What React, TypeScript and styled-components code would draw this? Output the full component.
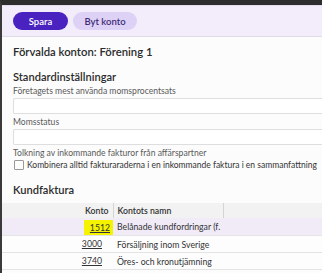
import styled, { createGlobalStyle } from 'styled-components'

const Global = createGlobalStyle`
  html, body {
    margin: 0;
    padding: 0;
    background: #fcfcfc;
    overflow: hidden;
  }
  body {
    font-family: Lato, 'Open Sans', sans-serif;
    color: #333;
  }
`

const Window = styled.div`
  width: 322px;
  height: 273px;
  border-top: 5px solid #2d2d2d;
  border-left: 2px solid #3a3a3a;
  box-sizing: border-box;
  overflow: hidden;
  background: #fcfcfc;
`

const Toolbar = styled.div`
  display: flex;
  gap: 5px;
  padding: 0 11px;
  height: 32px;
  box-sizing: border-box;
  align-items: center;
  background: #f3ecfa;
  border-top: 1px solid #e4dcec;
  border-bottom: 1px solid #e0dbe6;
`

const Button = styled.button<{ $primary?: boolean }>`
  height: 18px;
  padding: 0;
  width: ${p => (p.$primary ? '55px' : '64px')};
  border: none;
  border-radius: 9px;
  font-family: inherit;
  font-size: 9.5px;
  font-weight: 600;
  background: ${p => (p.$primary ? '#4a22bf' : '#ddd1f5')};
  color: ${p => (p.$primary ? '#fff' : '#3d2a78')};
`

const Content = styled.div`
  padding: 8px 0 0 11px;
`

const Title = styled.h1`
  margin: 0 0 11px;
  font-size: 11.3px;
  line-height: 14px;
  font-weight: 600;
  color: #2b2b2b;
`

const Section = styled.h2<{ $gap?: number }>`
  margin: 0 0 ${p => p.$gap ?? 3}px;
  font-size: 11.1px;
  line-height: 13px;
  font-weight: 600;
  color: #2b2b2b;
`

const Label = styled.div`
  font-size: 8.6px;
  line-height: 10px;
  color: #5a5a5a;
  margin-bottom: 2px;
  white-space: nowrap;
`

const Input = styled.div`
  height: 16px;
  box-sizing: border-box;
  border: 1px solid #dedede;
  border-right: none;
  border-radius: 2px 0 0 2px;
  background: #fff;
  margin-bottom: 3px;
`

const CheckRow = styled.label`
  display: flex;
  align-items: center;
  gap: 3px;
  height: 10px;
  font-size: 8.5px;
  color: #333;
  white-space: nowrap;
  margin-bottom: 13px;
`

const Box = styled.span`
  flex: none;
  width: 10px;
  height: 10px;
  margin-left: 1px;
  border: 1px solid #9a9a9a;
  border-radius: 1px;
  background: #fff;
  box-sizing: border-box;
`

const Table = styled.table`
  border-collapse: collapse;
  width: 330px;
  margin-left: -11px;
  font-size: 8.7px;
`

const Th = styled.th<{ $w?: number; $right?: boolean }>`
  background: #f2f2f2;
  font-weight: 600;
  height: 15px;
  padding: 0 4px;
  box-sizing: border-box;
  text-align: ${p => (p.$right ? 'right' : 'left')};
  width: ${p => (p.$w ? `${p.$w}px` : 'auto')};
  border-right: 1px solid #d4d4d4;
  &:last-child { border-right: none; }
`

const Tr = styled.tr<{ $active?: boolean }>`
  background: ${p => (p.$active ? '#f1ebf8' : '#fdfdfd')};
  border-bottom: 1px solid #e4e4e4;
`

const Td = styled.td<{ $num?: boolean }>`
  height: 16px;
  padding: ${p => (p.$num ? '0 11px 0 0' : '0 4px')};
  white-space: nowrap;
  text-align: ${p => (p.$num ? 'right' : 'left')};
`

const Code = styled.a<{ $mark?: boolean }>`
  display: inline-block;
  vertical-align: middle;
  color: #333;
  text-decoration: underline;
  line-height: ${p => (p.$mark ? '15px' : '16px')};
  margin-top: ${p => (p.$mark ? '2px' : '0')};
  background: ${p => (p.$mark ? '#f4f400' : 'transparent')};
  padding: ${p => (p.$mark ? '0 3px 0 6px' : '0')};
  margin-right: ${p => (p.$mark ? '-11px' : '0')};
`

const rows = [
  { code: '1512', name: 'Belånade kundfordringar (f.', active: true },
  { code: '3000', name: 'Försäljning inom Sverige' },
  { code: '3740', name: 'Öres- och kronutjämning' },
]

export default function App() {
  return (
    <Window>
      <Global />
      <Toolbar>
        <Button $primary>Spara</Button>
        <Button>Byt konto</Button>
      </Toolbar>
      <Content>
        <Title>Förvalda konton: Förening 1</Title>
        <Section>Standardinställningar</Section>
        <Label>Företagets mest använda momsprocentsats</Label>
        <Input />
        <Label>Momsstatus</Label>
        <Input />
        <Label>Tolkning av inkommande fakturor från affärspartner</Label>
        <CheckRow>
          <Box />
          Kombinera alltid fakturaraderna i en inkommande faktura i en sammanfattning
        </CheckRow>
        <Section $gap={7}>Kundfaktura</Section>
        <Table>
          <thead>
            <tr>
              <Th $w={111} $right>Konto</Th>
              <Th $w={110}>Kontots namn</Th>
              <Th />
            </tr>
          </thead>
          <tbody>
            {rows.map(r => (
              <Tr key={r.code} $active={r.active}>
                <Td $num>
                  <Code href="#" $mark={r.active}>{r.code}</Code>
                </Td>
                <Td colSpan={2}>{r.name}</Td>
              </Tr>
            ))}
          </tbody>
        </Table>
      </Content>
    </Window>
  )
}
